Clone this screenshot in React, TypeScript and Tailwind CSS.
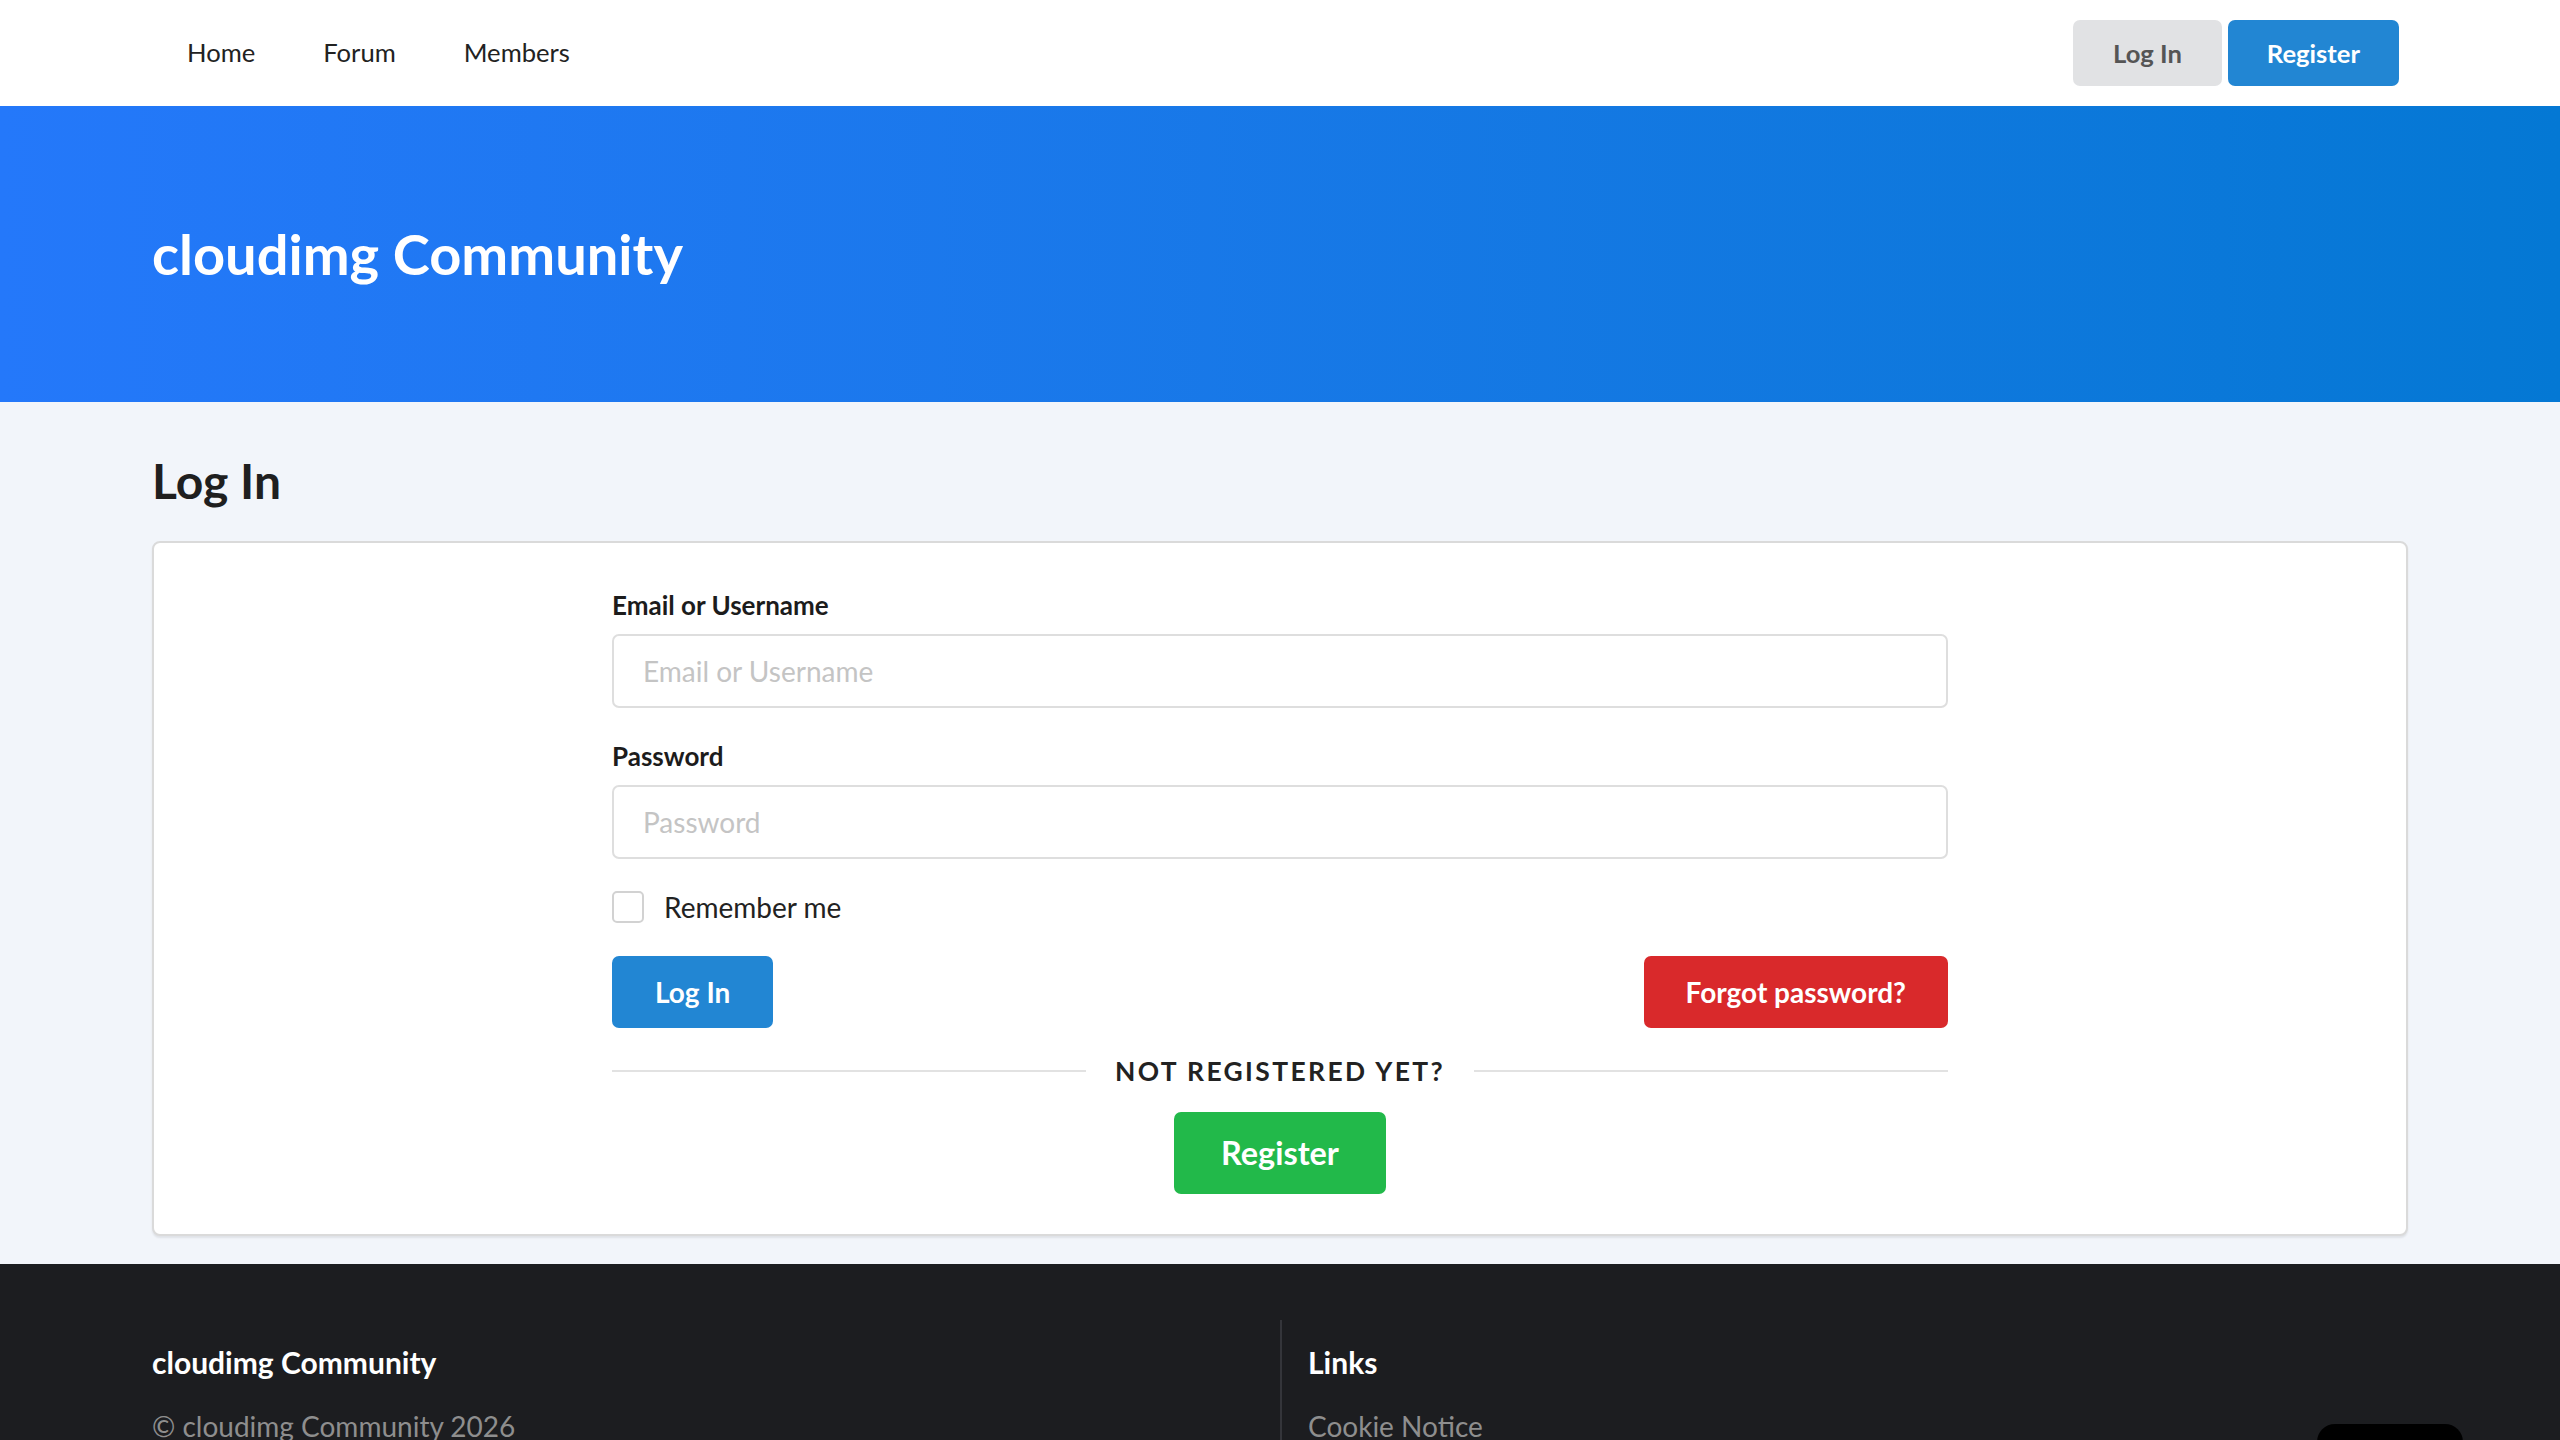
import { FC } from 'react';

const NavLink: FC<{ label: string }> = ({ label }) => (
    <a href="#" className="px-[34px] text-[25.6px] leading-none text-[#222]">
        {label}
    </a>
);

const Field: FC<{ id: string; label: string; type?: string; className?: string }> = (props) => (
    <div className={props.className}>
        <label htmlFor={props.id} className="mb-[16px] block text-[26px] leading-none font-bold text-[#1c1c1c]">
            {props.label}
        </label>
        <input
            id={props.id}
            type={props.type ?? 'text'}
            placeholder={props.label}
            className="block h-[74px] w-full rounded-[7px] border-2 border-[#dedede] bg-white px-[29px] text-[28px] text-[#222] outline-none placeholder:text-[#c4c4c4]"
        />
    </div>
);

export default function App() {
    return (
        <div className="min-h-screen bg-[#f2f5fa] font-['Lato','Noto_Sans',sans-serif] antialiased">
            <header className="bg-white">
                <div className="mx-auto flex h-[106px] w-[2256px] items-center justify-between">
                    <nav className="ml-px flex items-center">
                        <NavLink label="Home" />
                        <NavLink label="Forum" />
                        <NavLink label="Members" />
                    </nav>
                    <div className="mr-[9px] flex items-center gap-[6px]">
                        <button className="h-[66px] rounded-[7px] bg-[#e1e2e4] px-[40px] text-[25.6px] font-bold text-[#555]">
                            Log In
                        </button>
                        <button className="h-[66px] rounded-[7px] bg-[#2286d3] px-[39px] text-[25.6px] font-bold text-white">
                            Register
                        </button>
                    </div>
                </div>
            </header>

            <section className="bg-gradient-to-r from-[#2478fa] to-[#0478d4]">
                <div className="mx-auto flex h-[296px] w-[2256px] items-center">
                    <h1 className="text-[56px] leading-none font-bold text-white">cloudimg Community</h1>
                </div>
            </section>

            <main className="mx-auto w-[2256px] pt-[55px] pb-[28px]">
                <h2 className="text-[48px] leading-none font-bold text-[#1f1f1f]">Log In</h2>
                <div className="mt-[36px] rounded-[8px] border-2 border-[#dadada] bg-white pt-[49px] pb-[40px] shadow-[0_2px_2px_rgba(0,0,0,0.08)]">
                    <form className="mx-auto w-[1336px]">
                        <Field id="login" label="Email or Username" />
                        <Field id="password" label="Password" type="password" className="mt-[35px]" />

                        <label className="mt-[32px] flex items-center gap-[20px]">
                            <span className="h-[32px] w-[32px] rounded-[5px] border-2 border-[#d2d2d2] bg-white" />
                            <span className="text-[28px] leading-none text-[#222]">Remember me</span>
                        </label>

                        <div className="mt-[33px] flex items-center justify-between">
                            <button
                                type="button"
                                className="h-[72px] rounded-[7px] bg-[#2286d3] px-[43px] text-[28px] font-bold text-white"
                            >
                                Log In
                            </button>
                            <button
                                type="button"
                                className="h-[72px] rounded-[7px] bg-[#d9292b] px-[42px] text-[28px] font-bold text-white"
                            >
                                Forgot password?
                            </button>
                        </div>

                        <div className="mt-[30px] flex items-center gap-[29px]">
                            <span className="h-[2px] flex-1 bg-[#e2e2e2]" />
                            <span className="text-[26.4px] leading-none font-bold tracking-[2.4px] text-[#222]">
                                NOT REGISTERED YET?
                            </span>
                            <span className="h-[2px] flex-1 bg-[#e2e2e2]" />
                        </div>

                        <div className="mt-[28px] flex justify-center">
                            <button
                                type="button"
                                className="h-[82px] rounded-[7px] bg-[#22b94a] px-[47px] text-[32.4px] font-bold text-white"
                            >
                                Register
                            </button>
                        </div>
                    </form>
                </div>
            </main>

            <footer className="bg-[#1c1d20] pt-[56px] pb-[120px]">
                <div className="mx-auto grid w-[2256px] grid-cols-2">
                    <div className="pt-[27px]">
                        <h3 className="text-[30px] leading-none font-bold text-white">cloudimg Community</h3>
                        <p className="mt-[35px] text-[28px] leading-none text-[#8e8e8e]">© cloudimg Community 2026</p>
                    </div>
                    <div className="border-l-2 border-[#34353a] pt-[27px] pl-[26px]">
                        <h3 className="text-[30px] leading-none font-bold text-white">Links</h3>
                        <a href="#" className="mt-[35px] block text-[28px] leading-none text-[#8e8e8e]">
                            Cookie Notice
                        </a>
                    </div>
                </div>
            </footer>

            <div className="fixed right-[97px] bottom-[-40px] h-[56px] w-[146px] rounded-[18px] bg-black" />
        </div>
    );
}
